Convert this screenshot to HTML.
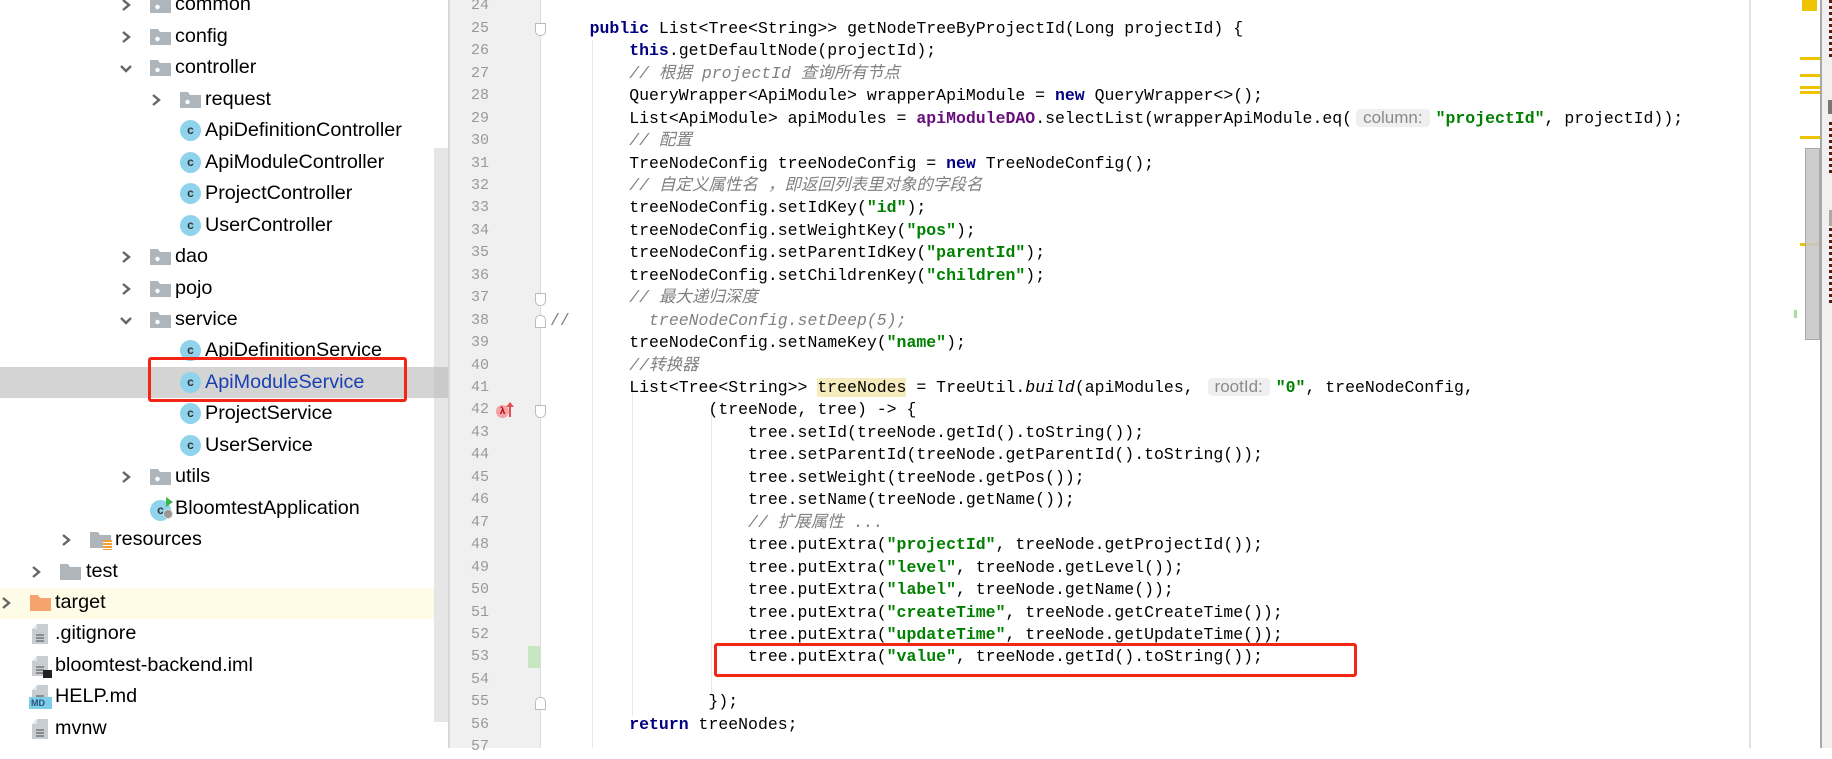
<!DOCTYPE html>
<html><head><meta charset="utf-8"><style>
*{margin:0;padding:0;box-sizing:border-box}
body{width:1832px;height:748px;overflow:hidden;background:#fff;position:relative;font-family:"Liberation Sans","Noto Sans CJK SC",sans-serif}
.a{position:absolute}
.row{position:absolute;left:0;width:434px;height:31.45px;line-height:31.45px;font-size:19.8px;color:#000;white-space:nowrap}
.row .t{position:absolute}
.chev{position:absolute;top:9px;width:12px;height:14px}
.fold{position:absolute;top:8px;width:21px;height:16px}
.cls{position:absolute;top:5px;width:21px;height:21px;border-radius:50%;background:#8fd3ec;color:#333;font:bold 12px "Liberation Sans",sans-serif;line-height:21px;text-align:center}
.ln{position:absolute;left:449px;width:40px;text-align:right;font:15px "Liberation Mono",monospace;color:#999;height:22.45px;line-height:22.45px}
.cl{position:absolute;left:550px;height:22.45px;line-height:22.45px;font-size:16.5px;font-family:"Liberation Mono","Noto Sans CJK SC",monospace;white-space:pre;color:#000}
.k{color:#000080;font-weight:bold}
.s{color:#008000;font-weight:bold}
.c{color:#808080;font-style:italic}
.f{color:#660e7a;font-weight:bold}
.h{display:inline-block;background:#efefef;color:#8a8a8a;font:17px "Liberation Sans",sans-serif;border-radius:4px;padding:0 7px;margin:0 6px 0 4px;line-height:18px;vertical-align:0px}
.hl{background:#f6ebbc}
.fm{position:absolute;left:535px;width:11px;height:13px;border:1px solid #bbb;background:#fff;border-radius:0 0 5px 5px}
.ig{position:absolute;width:1px;background:#e6e6e6}
.ym{position:absolute;left:1800px;width:20px;height:3px;background:#eec400}
</style></head><body>

<div class="a" style="left:0;top:367px;width:434px;height:31px;background:#d4d4d4"></div>
<div class="a" style="left:0;top:588px;width:447px;height:31px;background:#fefce6"></div>
<div class="a" style="left:434px;top:148px;width:14px;height:574px;background:#e6e6e6"></div>
<div class="a" style="left:434px;top:367px;width:14px;height:31px;background:#cacaca"></div>
<div class="a" style="left:448px;top:0;width:2px;height:748px;background:#d8d8d8"></div>

<svg width="0" height="0" style="position:absolute">
<defs>
<symbol id="ch" viewBox="0 0 12 14"><path d="M3 2 L9 7 L3 12" fill="none" stroke="#666" stroke-width="2.4"/></symbol>
<symbol id="cd" viewBox="0 0 14 12"><path d="M2 3 L7 8 L12 3" fill="none" stroke="#666" stroke-width="2.4"/></symbol>
<symbol id="fd" viewBox="0 0 21 16"><path d="M0 0 H8 L10 3 H21 V16 H0Z" fill="#aeb5bb"/><circle cx="7.5" cy="10" r="2.2" fill="#fff"/></symbol>
<symbol id="fp" viewBox="0 0 21 16"><path d="M0 0 H8 L10 3 H21 V16 H0Z" fill="#aeb5bb"/></symbol>
<symbol id="fo" viewBox="0 0 21 16"><path d="M0 0 H8 L10 3 H21 V16 H0Z" fill="#f5a46e"/></symbol>
<symbol id="fl" viewBox="0 0 16 20"><path d="M5 0 H16 V20 H0 V5Z" fill="#c8cdd1"/><path d="M0 5 H5 V0Z" fill="#e4e6e8"/><path d="M4 11 H12 M4 14 H12 M4 17 H12" stroke="#666" stroke-width="1.2"/></symbol>
</defs></svg>

<div class="row" style="top:-10.7px"><svg class="chev" style="left:120px"><use href="#ch"/></svg><svg class="fold" style="left:150px"><use href="#fd"/></svg><span class="t" style="left:175px">common</span></div>
<div class="row" style="top:21px"><svg class="chev" style="left:120px"><use href="#ch"/></svg><svg class="fold" style="left:150px"><use href="#fd"/></svg><span class="t" style="left:175px">config</span></div>
<div class="row" style="top:52.3px"><svg class="chev" style="left:119px;width:14px;height:12px;top:11px"><use href="#cd"/></svg><svg class="fold" style="left:150px"><use href="#fd"/></svg><span class="t" style="left:175px">controller</span></div>
<div class="row" style="top:83.8px"><svg class="chev" style="left:150px"><use href="#ch"/></svg><svg class="fold" style="left:180px"><use href="#fd"/></svg><span class="t" style="left:205px">request</span></div>
<div class="row" style="top:115.2px"><span class="cls" style="left:180px">c</span><span class="t" style="left:205px">ApiDefinitionController</span></div>
<div class="row" style="top:146.7px"><span class="cls" style="left:180px">c</span><span class="t" style="left:205px">ApiModuleController</span></div>
<div class="row" style="top:178.1px"><span class="cls" style="left:180px">c</span><span class="t" style="left:205px">ProjectController</span></div>
<div class="row" style="top:209.6px"><span class="cls" style="left:180px">c</span><span class="t" style="left:205px">UserController</span></div>
<div class="row" style="top:241px"><svg class="chev" style="left:120px"><use href="#ch"/></svg><svg class="fold" style="left:150px"><use href="#fd"/></svg><span class="t" style="left:175px">dao</span></div>
<div class="row" style="top:272.5px"><svg class="chev" style="left:120px"><use href="#ch"/></svg><svg class="fold" style="left:150px"><use href="#fd"/></svg><span class="t" style="left:175px">pojo</span></div>
<div class="row" style="top:303.9px"><svg class="chev" style="left:119px;width:14px;height:12px;top:11px"><use href="#cd"/></svg><svg class="fold" style="left:150px"><use href="#fd"/></svg><span class="t" style="left:175px">service</span></div>
<div class="row" style="top:335.4px"><span class="cls" style="left:180px">c</span><span class="t" style="left:205px">ApiDefinitionService</span></div>
<div class="row" style="top:366.8px"><span class="cls" style="left:180px">c</span><span class="t" style="left:205px;color:#1a3fb0">ApiModuleService</span></div>
<div class="row" style="top:398.3px"><span class="cls" style="left:180px">c</span><span class="t" style="left:205px">ProjectService</span></div>
<div class="row" style="top:429.7px"><span class="cls" style="left:180px">c</span><span class="t" style="left:205px">UserService</span></div>
<div class="row" style="top:461.2px"><svg class="chev" style="left:120px"><use href="#ch"/></svg><svg class="fold" style="left:150px"><use href="#fd"/></svg><span class="t" style="left:175px">utils</span></div>
<div class="row" style="top:492.6px"><span class="cls" style="left:150px;top:7px">c</span><span class="a" style="left:163px;top:16px;width:10px;height:10px;border-radius:50%;background:#999;border:1.5px solid #ddd"></span><span class="a" style="left:166px;top:4px;width:0;height:0;border-left:7px solid #3bb54a;border-top:5px solid transparent;border-bottom:5px solid transparent"></span><span class="t" style="left:175px">BloomtestApplication</span></div>
<div class="row" style="top:524.1px"><svg class="chev" style="left:60px"><use href="#ch"/></svg><svg class="fold" style="left:90px"><use href="#fp"/></svg><span class="a" style="left:103px;top:16px;width:9px;height:10px;background:repeating-linear-gradient(#f0a030 0 2px,#fff 2px 3px)"></span><span class="t" style="left:115px">resources</span></div>
<div class="row" style="top:555.5px"><svg class="chev" style="left:30px"><use href="#ch"/></svg><svg class="fold" style="left:60px"><use href="#fp"/></svg><span class="t" style="left:86px">test</span></div>
<div class="row" style="top:587px"><svg class="chev" style="left:0px"><use href="#ch"/></svg><svg class="fold" style="left:30px"><use href="#fo"/></svg><span class="t" style="left:55px">target</span></div>
<div class="row" style="top:618.4px"><svg class="a" style="left:32px;top:6px" width="16" height="20"><use href="#fl"/></svg><span class="t" style="left:55px">.gitignore</span></div>
<div class="row" style="top:649.9px"><svg class="a" style="left:32px;top:6px" width="16" height="20"><use href="#fl"/></svg><span class="a" style="left:43px;top:20px;width:9px;height:8px;background:#222"></span><span class="t" style="left:55px">bloomtest-backend.iml</span></div>
<div class="row" style="top:681.3px"><svg class="a" style="left:32px;top:4px" width="16" height="20"><use href="#fl"/></svg><span class="a" style="left:29px;top:16px;width:23px;height:12px;background:#7fcde8;color:#24527a;font:bold 9px 'Liberation Sans',sans-serif;line-height:12px;padding-left:2px">MD</span><span class="t" style="left:55px">HELP.md</span></div>
<div class="row" style="top:712.8px"><svg class="a" style="left:32px;top:6px" width="16" height="20"><use href="#fl"/></svg><span class="t" style="left:55px">mvnw</span></div>

<div class="a" style="left:148px;top:357px;width:259px;height:45px;border:3.5px solid #f52516;border-radius:3px"></div>

<div class="a" style="left:450px;top:0;width:90px;height:748px;background:#f0f0f0"></div>
<div class="a" style="left:540px;top:0;width:1px;height:748px;background:#dcdcdc"></div>
<div class="a" style="left:528px;top:646px;width:12px;height:22px;background:#c6e5c0"></div>
<div class="a" style="left:496px;top:405px;width:13px;height:13px;border-radius:50%;background:#f2a2a8;color:#b00;font:bold 10px 'Liberation Sans',sans-serif;text-align:center;line-height:13px">λ</div>
<div class="a" style="left:509px;top:403px;width:1.5px;height:14px;background:#e05050"></div>
<div class="a" style="left:506px;top:402px;width:0;height:0;border-left:4px solid transparent;border-right:4px solid transparent;border-bottom:5px solid #e05050"></div>

<div class="fm" style="top:23px"></div>
<div class="fm" style="top:293px"></div>
<div class="fm" style="top:315px;border-radius:5px 5px 0 0"></div>
<div class="fm" style="top:405px"></div>
<div class="fm" style="top:697px;border-radius:5px 5px 0 0"></div>

<div class="ig" style="left:592px;top:40px;height:708px"></div>
<div class="ig" style="left:632px;top:390px;height:326px"></div>
<div class="ig" style="left:711px;top:412px;height:282px"></div>

<div class="ln" style="top:-4.7px">24</div>
<div class="ln" style="top:17.8px">25</div>
<div class="ln" style="top:40.2px">26</div>
<div class="ln" style="top:62.7px">27</div>
<div class="ln" style="top:85.1px">28</div>
<div class="ln" style="top:107.6px">29</div>
<div class="ln" style="top:130px">30</div>
<div class="ln" style="top:152.5px">31</div>
<div class="ln" style="top:174.9px">32</div>
<div class="ln" style="top:197.4px">33</div>
<div class="ln" style="top:219.8px">34</div>
<div class="ln" style="top:242.3px">35</div>
<div class="ln" style="top:264.7px">36</div>
<div class="ln" style="top:287.2px">37</div>
<div class="ln" style="top:309.6px">38</div>
<div class="ln" style="top:332.1px">39</div>
<div class="ln" style="top:354.5px">40</div>
<div class="ln" style="top:377px">41</div>
<div class="ln" style="top:399.4px">42</div>
<div class="ln" style="top:421.9px">43</div>
<div class="ln" style="top:444.3px">44</div>
<div class="ln" style="top:466.8px">45</div>
<div class="ln" style="top:489.2px">46</div>
<div class="ln" style="top:511.7px">47</div>
<div class="ln" style="top:534.1px">48</div>
<div class="ln" style="top:556.6px">49</div>
<div class="ln" style="top:579px">50</div>
<div class="ln" style="top:601.5px">51</div>
<div class="ln" style="top:623.9px">52</div>
<div class="ln" style="top:646.4px">53</div>
<div class="ln" style="top:668.8px">54</div>
<div class="ln" style="top:691.3px">55</div>
<div class="ln" style="top:713.7px">56</div>
<div class="ln" style="top:736.2px">57</div>

<div class="cl" style="top:17.8px">    <span class="k">public</span> List&lt;Tree&lt;String&gt;&gt; getNodeTreeByProjectId(Long projectId) {</div>
<div class="cl" style="top:40.2px">        <span class="k">this</span>.getDefaultNode(projectId);</div>
<div class="cl" style="top:62.7px">        <span class="c">// 根据 projectId 查询所有节点</span></div>
<div class="cl" style="top:85.1px">        QueryWrapper&lt;ApiModule&gt; wrapperApiModule = <span class="k">new</span> QueryWrapper&lt;&gt;();</div>
<div class="cl" style="top:107.6px">        List&lt;ApiModule&gt; apiModules = <span class="f">apiModuleDAO</span>.selectList(wrapperApiModule.eq(<span class="h">column:</span><span class="s">"projectId"</span>, projectId));</div>
<div class="cl" style="top:130px">        <span class="c">// 配置</span></div>
<div class="cl" style="top:152.5px">        TreeNodeConfig treeNodeConfig = <span class="k">new</span> TreeNodeConfig();</div>
<div class="cl" style="top:174.9px">        <span class="c">// 自定义属性名 ，即返回列表里对象的字段名</span></div>
<div class="cl" style="top:197.4px">        treeNodeConfig.setIdKey(<span class="s">"id"</span>);</div>
<div class="cl" style="top:219.8px">        treeNodeConfig.setWeightKey(<span class="s">"pos"</span>);</div>
<div class="cl" style="top:242.3px">        treeNodeConfig.setParentIdKey(<span class="s">"parentId"</span>);</div>
<div class="cl" style="top:264.7px">        treeNodeConfig.setChildrenKey(<span class="s">"children"</span>);</div>
<div class="cl" style="top:287.2px">        <span class="c">// 最大递归深度</span></div>
<div class="cl" style="top:309.6px"><span style="color:#808080">//</span>        <span class="c">treeNodeConfig.setDeep(5);</span></div>
<div class="cl" style="top:332.1px">        treeNodeConfig.setNameKey(<span class="s">"name"</span>);</div>
<div class="cl" style="top:354.5px">        <span class="c">//转换器</span></div>
<div class="cl" style="top:377px">        List&lt;Tree&lt;String&gt;&gt; <span class="hl">treeNodes</span> = TreeUtil.<i>build</i>(apiModules, <span class="h">rootId:</span><span class="s">"0"</span>, treeNodeConfig,</div>
<div class="cl" style="top:399.4px">                (treeNode, tree) -&gt; {</div>
<div class="cl" style="top:421.9px">                    tree.setId(treeNode.getId().toString());</div>
<div class="cl" style="top:444.3px">                    tree.setParentId(treeNode.getParentId().toString());</div>
<div class="cl" style="top:466.8px">                    tree.setWeight(treeNode.getPos());</div>
<div class="cl" style="top:489.2px">                    tree.setName(treeNode.getName());</div>
<div class="cl" style="top:511.7px">                    <span class="c">// 扩展属性 ...</span></div>
<div class="cl" style="top:534.1px">                    tree.putExtra(<span class="s">"projectId"</span>, treeNode.getProjectId());</div>
<div class="cl" style="top:556.6px">                    tree.putExtra(<span class="s">"level"</span>, treeNode.getLevel());</div>
<div class="cl" style="top:579px">                    tree.putExtra(<span class="s">"label"</span>, treeNode.getName());</div>
<div class="cl" style="top:601.5px">                    tree.putExtra(<span class="s">"createTime"</span>, treeNode.getCreateTime());</div>
<div class="cl" style="top:623.9px">                    tree.putExtra(<span class="s">"updateTime"</span>, treeNode.getUpdateTime());</div>
<div class="cl" style="top:646.4px">                    tree.putExtra(<span class="s">"value"</span>, treeNode.getId().toString());</div>
<div class="cl" style="top:691.3px">                });</div>
<div class="cl" style="top:713.7px">        <span class="k">return</span> treeNodes;</div>

<div class="a" style="left:714px;top:643px;width:643px;height:34px;border:3.5px solid #f52516;border-radius:3px"></div>

<div class="a" style="left:1749px;top:0;width:2px;height:748px;background:#e2e2e2"></div>
<div class="a" style="left:1802px;top:0;width:15px;height:11px;background:#eec400"></div>
<div class="ym" style="top:57px"></div>
<div class="ym" style="top:74px"></div>
<div class="ym" style="top:86px"></div>
<div class="ym" style="top:91px"></div>
<div class="ym" style="top:136px"></div>
<div class="ym" style="top:243px"></div>
<div class="a" style="left:1794px;top:310px;width:3px;height:8px;background:#a8dca0"></div>
<div class="a" style="left:1805px;top:148px;width:15px;height:192px;background:rgba(200,200,200,.9);border:1.5px solid #a8a8a8"></div>
<div class="a" style="left:1820px;top:0;width:2px;height:748px;background:#a8a8a8"></div>
<div class="a" style="left:1822px;top:0;width:10px;height:748px;background:#f0f0f0"></div>
<div class="a" style="left:1829px;top:0;width:3px;height:60px;background:repeating-linear-gradient(#5a1a10 0 3px,#f0f0f0 3px 6px)"></div>
<div class="a" style="left:1828px;top:100px;width:4px;height:14px;background:#777"></div>
<div class="a" style="left:1829px;top:122px;width:3px;height:52px;background:repeating-linear-gradient(#5a1a10 0 3px,#f0f0f0 3px 6px)"></div>
<div class="a" style="left:1829px;top:210px;width:3px;height:16px;background:#aaa"></div>
<div class="a" style="left:1829px;top:228px;width:3px;height:78px;background:repeating-linear-gradient(#5a1a10 0 3px,#f0f0f0 3px 6px)"></div>
</body></html>
